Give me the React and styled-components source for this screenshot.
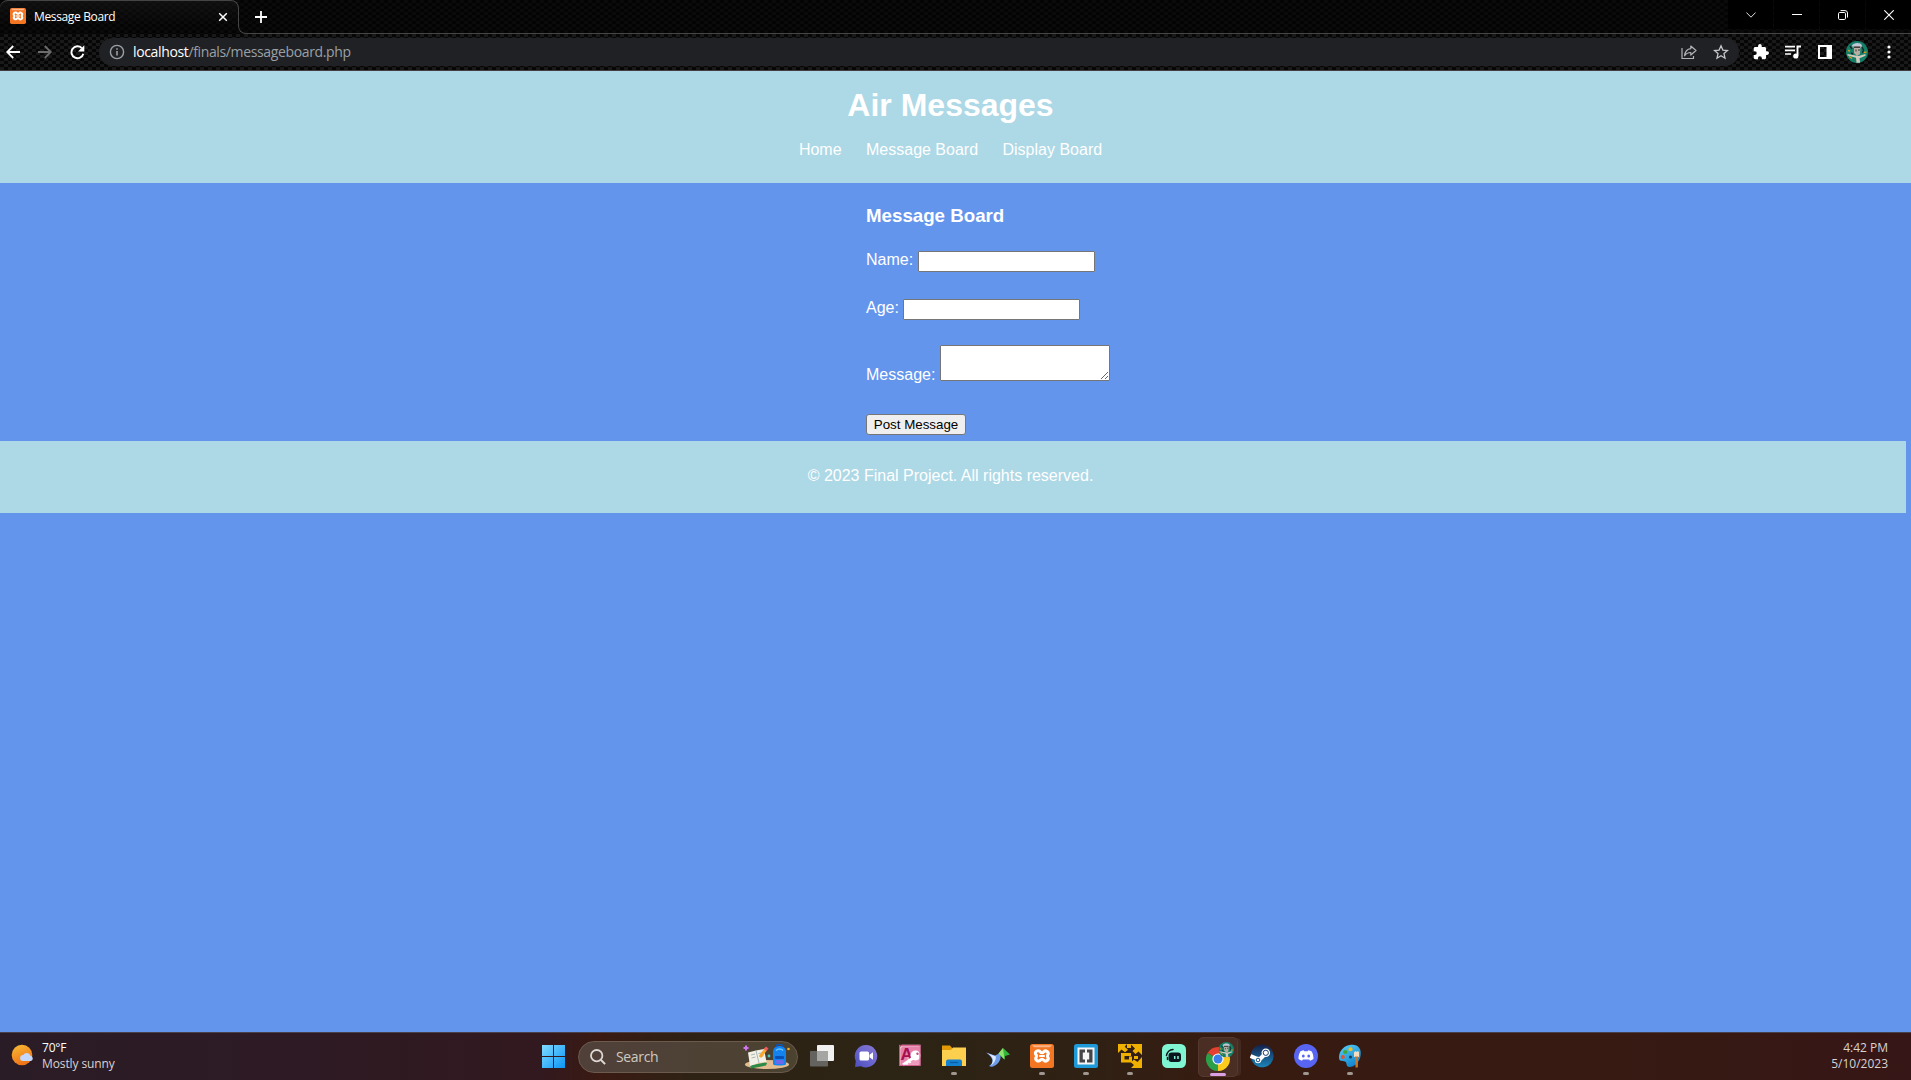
import React from 'react';
import styled, { createGlobalStyle, css } from 'styled-components';

const uiFont = '"Open Sans", "Noto Sans", sans-serif';
const pageFont = '"Liberation Sans", Arial, sans-serif';

const GlobalStyle = createGlobalStyle`
  * { box-sizing: border-box; }
  html, body { margin: 0; padding: 0; background: #6495ed; overflow: hidden; }
  svg { display: block; flex: none; }
`;

const Screen = styled.div`
  width: 100%;
  height: 1080px;
  display: flex;
  flex-direction: column;
  overflow: hidden;
`;

const weave = (a) => css`
  background-image:
    conic-gradient(rgba(255,255,255,${a}) 25%, transparent 0 50%, rgba(255,255,255,${a}) 0 75%, transparent 0);
  background-size: 8px 6px;
`;

/* ---------- browser ---------- */
const TabStrip = styled.div`
  height: 34px;
  display: flex;
  background-color: #040404;
  ${weave(0.022)}
`;
const Tab = styled.div`
  width: 239px;
  height: 26px;
  padding: 7px 9px 0 10px;
  display: flex;
  align-items: flex-start;
  border: 1px solid #454545;
  border-width: 1px 1px 0 0;
  border-radius: 8px 8px 0 0;
  background: linear-gradient(#1f1f1f66, #00000000);
`;
const TabTitle = styled.span`
  flex: 1;
  margin-left: 8px;
  font: 12px/18px ${uiFont};
  letter-spacing: -0.36px;
  color: #fff;
  white-space: nowrap;
`;
const TabClose = styled.span`
  padding: 4px 1px 0 0;
`;
const TabFlare = styled.div`
  align-self: flex-end;
  width: 9px;
  height: 9px;
  margin-left: -1px;
  border: 1px solid #454545;
  border-width: 0 0 1px 1px;
  border-radius: 0 0 0 8px;
`;
const StripRest = styled.div`
  flex: 1;
  display: flex;
  justify-content: space-between;
  border-bottom: 1px solid #454545;
`;
const NewTab = styled.span`
  padding: 11px 0 0 8px;
`;
const WindowControls = styled.div`
  display: flex;
  gap: 1px;
  height: 29px;
`;
const WindowButton = styled.span`
  width: 45px;
  display: flex;
  align-items: center;
  justify-content: center;
  background: #000;
`;
const Toolbar = styled.div`
  height: 37px;
  display: flex;
  align-items: center;
  padding-right: 6px;
  background-color: #060606;
  ${weave(0.075)}
  border-bottom: 1px solid #433c40;
`;
const ToolButton = styled.span`
  width: ${(p) => p.$w || 32}px;
  padding-right: ${(p) => p.$pad || 0}px;
  display: flex;
  justify-content: center;
`;
const Omnibox = styled.div`
  flex: 1;
  height: 28px;
  margin: 0 6px;
  padding: 0 2px 0 10px;
  display: flex;
  align-items: center;
  border-radius: 14px;
  background: #202124;
`;
const Url = styled.span`
  flex: 1;
  margin-left: 8px;
  font: 14px/20px ${uiFont};
  letter-spacing: -0.36px;
  color: #9aa0a6;
  b { font-weight: 400; color: #fff; }
`;

/* ---------- web page ---------- */
const Page = styled.div`
  height: 961px;
  background: #6495ed;
  color: #fff;
  font: 16px/18px ${pageFont};
`;
const PageHeader = styled.header`
  height: 112px;
  padding: 16px 10px 0 0;
  display: flex;
  flex-direction: column;
  align-items: center;
  gap: 17px;
  background: #add8e6;
`;
const SiteTitle = styled.h1`
  margin: 0;
  font-size: 32px;
  line-height: 37px;
`;
const Nav = styled.nav`
  display: flex;
  gap: 24.45px;
`;
const NavLink = styled.a`
  color: #fff;
  text-decoration: none;
`;
const Form = styled.form`
  height: 258px;
  padding: 22px 0 0 866px;
  display: flex;
  flex-direction: column;
  align-items: flex-start;
`;
const FormTitle = styled.h3`
  margin: 0 0 25px;
  font-size: 18.72px;
  line-height: 21px;
`;
const Field = styled.label`
  display: flex;
  align-items: flex-start;
  gap: 4.45px;
  height: ${(p) => p.$h || 21}px;
  margin-bottom: ${(p) => p.$gap}px;
`;
const FieldName = styled.span`
  align-self: ${(p) => (p.$bottom ? 'flex-end' : 'flex-start')};
`;
const Input = styled.input`
  width: 177px;
  height: 21px;
  margin: 0;
  padding: 1px 2px;
  border: 1px solid #767676;
  border-radius: 1px;
  background: #fff;
`;
const TextArea = styled.textarea`
  width: 170px;
  height: 36px;
  margin: 0;
  padding: 2px;
  border: 1px solid #767676;
  border-radius: 1px;
  background: #fff;
`;
const Submit = styled.button`
  width: 100px;
  height: 21px;
  margin: 0;
  padding: 0;
  border: 1px solid #767676;
  border-radius: 3px;
  background: #efefef;
  color: #000;
  font: 13.333px/15px ${pageFont};
  white-space: nowrap;
`;
const PageFooter = styled.footer`
  width: calc(100% - 5px);
  height: 72px;
  padding: 26px 5px 0 0;
  text-align: center;
  background: #add8e6;
`;

/* ---------- taskbar ---------- */
const Taskbar = styled.div`
  height: 48px;
  display: grid;
  grid-template-columns: 531px 1fr 531px;
  border-top: 1px solid #49404a;
  background: linear-gradient(90deg, #2a1c26 0, #2d1a24 270px, #32191f 540px, #3a1a12 600px, #2e2214 690px, #2c2414 900px, #2f2114 1080px, #371b11 1220px, #371a12 1600px, #361616 1911px);
  font: 12px/16px ${uiFont};
  color: #d8d3d2;
`;
const Weather = styled.div`
  display: flex;
  padding: 7px 0 0 11px;
`;
const Lines = styled.div`
  display: flex;
  flex-direction: column;
  padding-left: 7px;
`;
const Line = styled.span`
  white-space: nowrap;
  letter-spacing: ${(p) => p.$ls || 0}px;
  color: ${(p) => p.$c || 'inherit'};
`;
const Dock = styled.div`
  display: flex;
  align-items: center;
`;
const Start = styled.span`
  width: 47px;
  padding-left: 11px;
`;
const SearchPill = styled.div`
  width: 220px;
  height: 32px;
  margin-right: 2px;
  padding: 0 6px 0 11px;
  display: flex;
  align-items: center;
  border: 1px solid #6a5b4c;
  border-radius: 16px;
  background: linear-gradient(90deg, #50403a, #4b4230);
`;
const SearchText = styled.span`
  flex: 1;
  margin-left: 10px;
  font: 14px/20px ${uiFont};
  letter-spacing: -0.35px;
  color: #cfc9c2;
`;
const Slot = styled.div`
  width: 44px;
  height: 47px;
  display: grid;
  grid-template-rows: 24px 3px;
  row-gap: 4px;
  padding-top: 11px;
  justify-items: center;
  align-items: center;
`;
const ActiveSlot = styled(Slot)`
  width: 40px;
  height: 40px;
  margin: 0 2px;
  padding-top: 7px;
  border: 1px solid #55392f;
  border-radius: 5px;
  background: #4a2e23;
  box-shadow: 4px 0 0 -1px #432920;
`;
const Running = styled.span`
  width: ${(p) => (p.$active ? 16 : 6)}px;
  height: 3px;
  border-radius: 2px;
  background: ${(p) => (p.$active ? '#dba0e3' : '#a09790')};
`;
const Clock = styled.div`
  display: flex;
  flex-direction: column;
  align-items: flex-end;
  padding: 7px 23px 0 0;
`;

/* ---------- drawings ---------- */
const Svg = ({ s = 24, w, h, vb, children }) => (
  <svg width={w || s} height={h || s} viewBox={vb || `0 0 ${w || s} ${h || s}`} fill="none">{children}</svg>
);

const Xampp = ({ s }) => (
  <Svg s={s} vb="0 0 24 24">
    <rect width="24" height="24" rx="2.5" fill="#f37623" />
    <path d="M2 1.2h20l-2 2H4z" fill="#f9b48a" />
    <path d="M8 6.7a2.5 2.5 0 0 0-1.6 4.5v1.6A2.5 2.5 0 1 0 10.5 16c.6-1.1 2.4-1.1 3 0a2.5 2.5 0 1 0 4.1-3.2v-1.6A2.5 2.5 0 1 0 13.5 8c-.6 1.1-2.4 1.1-3 0A2.5 2.5 0 0 0 8 6.7z" stroke="#fff" strokeWidth="3" />
    <path d="M9.2 12h5.6" stroke="#fff" strokeWidth="2" />
  </Svg>
);

const Avatar = ({ s }) => (
  <Svg s={s} vb="0 0 22 22">
    <circle cx="11" cy="11" r="11" fill="#15806a" />
    <path d="M6 4.5C7 1.5 15 .8 16 4.5L15 7H7z" fill="#bfc8d6" />
    <path d="M8 5h6.5l-.5 8-3 2-3-3z" fill="#b9aea4" />
    <path d="M7.5 6.2h6.8" stroke="#222" strokeWidth="1.2" />
    <path d="M10 8.5v2M13 8v2" stroke="#3b3634" />
    <path d="M1.5 13l8 1.5 3 .5 7-2v1.7l-6 2.5.6 4.6h-3.6l-.5-5-8.500-2.300z" fill="#d2cabd" />
    <path d="M2 9.500l2 .5M17.500 11.500l3-.3M3 15.500l3 2" stroke="#e09a1d" strokeWidth="1.300" />
    <path d="M4 5l2 3M16 6l1.500 3-1 3M5 12l2 1" stroke="#102b28" strokeWidth="1.400" />
  </Svg>
);

const SearchArt = () => (
  <Svg w={48} h={26}>
    <ellipse cx="24" cy="20.500" rx="22" ry="4.500" fill="#e3bd90" />
    <path d="M7 21.500l15-3 2 .5-1 2.500-15 3z" fill="#2c8b46" />
    <path d="M5 8.500l8-2 8-1.500 2.500 13-8 1-8.500 3z" fill="#f2f1e8" />
    <path d="M13 6.500l3 12.500M8 11l4-1M8.500 14l4-1M15.500 9.500l4-.7M16.500 12.500l4-.7" stroke="#a9b6b0" />
    <path d="M17 13l6-8" stroke="#f8a72b" strokeWidth="3" />
    <path d="M22.200 6l2-2.600" stroke="#ef5963" strokeWidth="3.200" />
    <path d="M30 8c0-8 13-8 13 0v12c0 2-13 2-13 0z" fill="#1583ef" />
    <path d="M33.500 3c0-4 6-4 6 0" stroke="#0b57bd" strokeWidth="1.500" />
    <path d="M33 6.500c2-2 5.500-2 7 0" stroke="#65c6ff" strokeWidth="1.500" />
    <rect x="32" y="12" width="9" height="3" rx="1" fill="#0a4fb4" />
    <rect x="32" y="16" width="9" height="4" rx="1.500" fill="#6b68ea" />
    <path d="M3 1.500v5M.5 4h5" stroke="#d274ef" strokeWidth="2" />
    <circle cx="26" cy="12" r="1.400" fill="#49c6b4" />
    <circle cx="45.500" cy="5" r="1.300" fill="#f6b42a" />
  </Svg>
);

const TaskViewIcon = () => (
  <Svg>
    <rect x="7" y="1" width="17" height="16" rx="1" fill="#f1f1f1" />
    <rect x="0" y="7" width="18" height="15.500" rx="1" fill="#6a6a68" fillOpacity=".9" />
    <path d="M7 7h11v10H7z" fill="#a5a5a3" />
  </Svg>
);
const ChatIcon = () => (
  <Svg>
    <defs><linearGradient id="chat" x1="1" y1="0" x2="0" y2="1"><stop stopColor="#8b78d0" /><stop offset=".5" stopColor="#6b67cf" /><stop offset="1" stopColor="#4d4dbd" /></linearGradient></defs>
    <path d="M12 1a11.200 11.200 0 1 1-5 21.200L1 23l.8-6A11.200 11.200 0 0 1 12 1z" fill="url(#chat)" />
    <rect x="5.500" y="7.500" width="9.500" height="9" rx="1.500" fill="#fff" />
    <path d="M15.500 10.800l3.500-2.500v7.400l-3.500-2.500z" fill="#fff" />
  </Svg>
);
const AccessIcon = () => (
  <Svg>
    <path d="M4 .8h18.500v21H1V4z" fill="#f3b7cd" />
    <path d="M4.500 2.500H21V13L8 20.500H2.500V5z" fill="#e783ab" />
    <path d="M9 13l12-4v11H9z" fill="#ee9cbd" />
    <text x="2.500" y="16" fontFamily="Liberation Sans" fontWeight="700" fontSize="17" fill="#a5104f">A</text>
    <circle cx="17.500" cy="11.500" r="5" fill="#fff" />
    <path d="M15 14L5 21" stroke="#fff" strokeWidth="3" />
    <path d="M8 19l1.500 2M11 17l1.500 2" stroke="#fff" strokeWidth="2" />
    <circle cx="19.500" cy="9.800" r="1.200" fill="#c64b80" />
    <rect x="1.500" y="1.300" width="20.500" height="20" stroke="#cf4f86" />
  </Svg>
);
const FolderIcon = () => (
  <Svg>
    <path d="M0 1.500h8l2.500 3H24V22H0z" fill="#e39a07" />
    <path d="M0 6h9l2-2.500h13V22H0z" fill="#fdcf4f" />
    <path d="M4 22v-4.500a2 2 0 0 1 2-2h12a2 2 0 0 1 2 2V22z" fill="#1480d0" />
    <path d="M8 18.500h8" stroke="#0b5aa5" strokeWidth="1.200" />
  </Svg>
);
const ShuttleIcon = () => (
  <Svg>
    <path d="M0 8.500l9 3 5-2.500c2 6-1 11-7 13.500-1.500.5-3 .3-4-.5 5-3 5-8-3-13.500z" fill="#6d9de8" />
    <path d="M1 9l9 3.500c0 4-2 7-5.500 9.300 4-5 3-9-3.500-12.800z" fill="#dceaff" />
    <path d="M17 4l7 6.500-5 1.500-.5 3.500-6-6z" fill="#34b63a" />
    <path d="M17 4l1.500 11.500-6-6z" fill="#8fe36e" />
  </Svg>
);
const BracketsIcon = () => (
  <Svg>
    <rect width="24" height="24" rx="2.500" fill="#1f9ad9" />
    <rect x="3.500" y="3.500" width="17" height="17" fill="#f5f5f5" />
    <path d="M5.500 5.500H11v3H8.800v7H11v3H5.500zM18.500 5.500H13v3h2.200v7H13v3h5.500z" fill="#434549" />
  </Svg>
);
const VmwareIcon = () => (
  <Svg>
    <g fill="#efb000">
      <path d="M0 0h9L6.700 2.700l3.300 3L7 8.300 3.500 5.500 0 9z" />
      <path d="M12.500 0H24v11l-3.500-3.500-3 2.500-3-3 2.500-2.500z" />
      <path d="M24 24H13l3-3-3-2.500 2.800-3 3.700 2.500L24 13z" />
      <path d="M3 9h5v3H6.500v3.500H11v-3h3v6H3z" />
      <path d="M9 0h4v4H9z" />
    </g>
    <path d="M8 9h5v3H8zM16 12h4v3h-4z" fill="#efb000" />
  </Svg>
);
const StreamlabsIcon = () => (
  <Svg>
    <rect width="24" height="24" rx="5.500" fill="#80f5d2" />
    <rect x="6.500" y="8.500" width="12.500" height="9.500" rx="3" fill="#09161d" />
    <path d="M4.500 11.500A7 7 0 0 1 11 5.500M5.500 13.500v2" stroke="#09161d" strokeWidth="1.500" strokeLinecap="round" />
    <path d="M12.700 12v3M16 12v3" stroke="#80f5d2" strokeWidth="1.500" />
  </Svg>
);
const ChromeGlyph = () => (
  <Svg w={32} h={30} vb="-4 -5 32 30">
    <path d="M12 12L1.600 6A12 12 0 0 1 22.400 6z" fill="#e5402f" />
    <path d="M12 12l5.200 3L12 24A12 12 0 0 1 1.600 6z" fill="#2c9f49" />
    <path d="M12 12V6.500h10.700A12 12 0 0 1 12 24z" fill="#fcca1c" />
    <circle cx="12" cy="12" r="5.600" fill="#fff" />
    <circle cx="12" cy="12" r="4.500" fill="#3c7fe8" />
    <svg x="12.500" y="-5" width="15.500" height="15.500"><Avatar s={15.5} /></svg>
  </Svg>
);
const SteamIcon = () => (
  <Svg>
    <defs><linearGradient id="steam" x2="0" y2="1"><stop stopColor="#14204a" /><stop offset="1" stopColor="#1b84ba" /></linearGradient></defs>
    <path d="M1 9.500A11.400 11.400 0 1 1 1.500 16z" fill="url(#steam)" />
    <path d="M.5 12l7.500 3M9 16l5-5" stroke="#fff" strokeWidth="4" />
    <circle cx="8" cy="16" r="3.200" fill="#fff" />
    <circle cx="8" cy="16" r="1.800" stroke="#1b5486" />
    <circle cx="15.800" cy="8.800" r="4.300" fill="#fff" />
    <circle cx="15.800" cy="8.800" r="2.600" stroke="#1a3c6c" />
  </Svg>
);
const DiscordIcon = () => (
  <Svg>
    <circle cx="12" cy="12" r="12" fill="#5865f2" />
    <path d="M8.500 6.500l1.300-.3.600 1h3.200l.6-1c1.300.2 2.500.6 3.300 1.100 1.500 2.400 2.100 5 2 7.700-1 .9-2.300 1.400-3.500 1.700l-.8-1.300H8.800L8 16.700c-1.200-.3-2.500-.8-3.500-1.700-.1-2.700.5-5.300 2-7.700z" fill="#fff" />
    <ellipse cx="9.300" cy="12" rx="1.400" ry="1.600" fill="#5865f2" />
    <ellipse cx="14.700" cy="12" rx="1.400" ry="1.600" fill="#5865f2" />
  </Svg>
);
const PaintIcon = () => (
  <Svg>
    <defs><linearGradient id="paint" x2=".6" y2="1"><stop stopColor="#5bd3f5" /><stop offset="1" stopColor="#1284cf" /></linearGradient></defs>
    <path d="M13 .8C20 0 24 5 22.500 12c-1 6-6 11-11 11-4 0-2-4.500-4.500-5.500S1 18 1 13.500C1 7 6 1.500 13 .8z" fill="url(#paint)" />
    <circle cx="7.200" cy="8" r="2.100" fill="#45a536" />
    <circle cx="12.500" cy="5.200" r="2" fill="#f7bd1e" />
    <circle cx="4.800" cy="13" r="2" fill="#e75033" />
    <circle cx="12.500" cy="13" r="1.500" fill="#173b59" />
    <path d="M16 8.500l1.200-1.500 1 1 1-1 1 1L21 7v6h-5z" fill="#f3dcc0" />
    <path d="M17 12.500h3.200l-.4 11h-2.300z" fill="#c97527" />
  </Svg>
);

const apps = [
  { id: 'tasks', icon: TaskViewIcon },
  { id: 'chat', icon: ChatIcon },
  { id: 'access', icon: AccessIcon },
  { id: 'files', icon: FolderIcon, running: true },
  { id: 'shuttle', icon: ShuttleIcon },
  { id: 'xampp', icon: Xampp, running: true },
  { id: 'brackets', icon: BracketsIcon, running: true },
  { id: 'vmware', icon: VmwareIcon, running: true },
  { id: 'streamlabs', icon: StreamlabsIcon },
  { id: 'chrome', icon: ChromeGlyph, running: true, active: true },
  { id: 'steam', icon: SteamIcon },
  { id: 'discord', icon: DiscordIcon, running: true },
  { id: 'paint', icon: PaintIcon, running: true },
];

const fields = [
  { label: 'Name:', gap: 27 },
  { label: 'Age:', gap: 25 },
];

function BrowserChrome() {
  return (
    <>
      <TabStrip>
        <Tab>
          <Xampp s={16} />
          <TabTitle>Message Board</TabTitle>
          <TabClose><Svg s={10}><path d="M1.200 1.200l7.600 7.600M8.800 1.200L1.200 8.800" stroke="#fff" strokeWidth="1.500" /></Svg></TabClose>
        </Tab>
        <TabFlare />
        <StripRest>
          <NewTab><Svg s={12}><path d="M6 0v12M0 6h12" stroke="#fff" strokeWidth="1.800" /></Svg></NewTab>
          <WindowControls>
            <WindowButton><Svg w={10} h={6}><path d="M.4.500L5 5.200 9.600.5" stroke="#ddd" /></Svg></WindowButton>
            <WindowButton><Svg w={10} h={1}><path d="M0 .5h10" stroke="#fff" /></Svg></WindowButton>
            <WindowButton><Svg s={10}><rect x=".5" y="2.500" width="7" height="7" rx="1.200" stroke="#fff" /><path d="M2.500.6H7A2.500 2.500 0 0 1 9.500 3v4.500" stroke="#fff" /></Svg></WindowButton>
            <WindowButton><Svg s={10}><path d="M.3.300l9.400 9.400M9.700.3L.3 9.700" stroke="#fff" strokeWidth="1.100" /></Svg></WindowButton>
          </WindowControls>
        </StripRest>
      </TabStrip>
      <Toolbar>
        <ToolButton $w={29} $pad={3}><Svg s={14}><path d="M14 7H1.500M7.200 1L1.200 7l6 6" stroke="#fff" strokeWidth="1.800" /></Svg></ToolButton>
        <ToolButton><Svg s={14}><path d="M0 7h12.500M6.800 1l6 6-6 6" stroke="#6c6c6c" strokeWidth="1.800" /></Svg></ToolButton>
        <ToolButton><Svg s={15}><path d="M13.300 8.800A6 6 0 1 1 11.700 3" stroke="#fff" strokeWidth="1.900" /><path d="M14.300.3v6.200H8z" fill="#fff" /></Svg></ToolButton>
        <Omnibox>
          <Svg s={16}><circle cx="8" cy="8" r="6.600" stroke="#9aa0a6" strokeWidth="1.400" /><path d="M8 7v4.500M8 4.200v1.600" stroke="#9aa0a6" strokeWidth="1.600" /></Svg>
          <Url><b>localhost</b>/finals/messageboard.php</Url>
          <ToolButton><Svg s={16}><path d="M1 4v10.500h11.500V12" stroke="#b0b3b8" strokeWidth="1.200" /><path d="M9.800 2l5.200 4.500-5.200 4.500V8.500C7 8.500 5 9.500 3.600 11.800 4 7.700 6 5 9.800 4.600z" stroke="#b0b3b8" strokeWidth="1.200" strokeLinejoin="round" /></Svg></ToolButton>
          <ToolButton><Svg s={16}><path d="M8 1.800l1.900 4.300 4.600.4-3.500 3.100 1 4.600-4-2.400-4 2.400 1-4.600-3.500-3.100 4.600-.4z" stroke="#c4c7cb" strokeWidth="1.300" /></Svg></ToolButton>
        </Omnibox>
        <ToolButton><Svg s={16} vb="1 1 22 22"><path fill="#fff" d="M20.500 11H19V7c0-1.100-.9-2-2-2h-4V3.500a2.500 2.500 0 0 0-5 0V5H4c-1.100 0-2 .9-2 2v3.800h1.500a2.700 2.700 0 0 1 0 5.400H2V20c0 1.100.9 2 2 2h3.800v-1.500a2.700 2.700 0 0 1 5.400 0V22H17c1.100 0 2-.9 2-2v-4h1.500a2.500 2.500 0 0 0 0-5z" /></Svg></ToolButton>
        <ToolButton><Svg s={16}><path d="M0 2.600h10M0 6.300h10M0 10h6" stroke="#fff" strokeWidth="1.700" /><path d="M12.500 11.800V2.500H16" stroke="#fff" strokeWidth="1.900" /><circle cx="10.800" cy="12" r="2.600" fill="#fff" /></Svg></ToolButton>
        <ToolButton><Svg s={14}><rect x="1" y="1" width="12" height="12" stroke="#fff" strokeWidth="2" /><path d="M8.500 1H13v12H8.500z" fill="#fff" /></Svg></ToolButton>
        <ToolButton><Avatar s={22} /></ToolButton>
        <ToolButton><Svg w={4} h={14}><g fill="#fff"><circle cx="2" cy="2" r="1.600" /><circle cx="2" cy="7" r="1.600" /><circle cx="2" cy="12" r="1.600" /></g></Svg></ToolButton>
      </Toolbar>
    </>
  );
}

function MessageBoard() {
  return (
    <Page>
      <PageHeader>
        <SiteTitle>Air Messages</SiteTitle>
        <Nav>
          <NavLink>Home</NavLink>
          <NavLink>Message Board</NavLink>
          <NavLink>Display Board</NavLink>
        </Nav>
      </PageHeader>
      <Form onSubmit={(e) => e.preventDefault()}>
        <FormTitle>Message Board</FormTitle>
        {fields.map((f) => (
          <Field key={f.label} $gap={f.gap}>
            <FieldName>{f.label}</FieldName>
            <Input type="text" />
          </Field>
        ))}
        <Field $h={39} $gap={30}>
          <FieldName $bottom>Message:</FieldName>
          <TextArea />
        </Field>
        <Submit type="submit">Post Message</Submit>
      </Form>
      <PageFooter>© 2023 Final Project. All rights reserved.</PageFooter>
    </Page>
  );
}

function DesktopTaskbar() {
  return (
    <Taskbar>
      <Weather>
        <Svg w={24} h={32}>
          <defs><linearGradient id="sun" x2=".4" y2="1"><stop stopColor="#f8bd35" /><stop offset="1" stopColor="#ef7418" /></linearGradient></defs>
          <circle cx="11" cy="15" r="10.300" fill="url(#sun)" />
          <path d="M12 21a3 3 0 0 1 .2-6 4 4 0 0 1 7.300.8A2.700 2.700 0 0 1 20 21z" fill="#c3d8fa" />
        </Svg>
        <Lines>
          <Line $c="#fff" $ls={-0.2}>70°F</Line>
          <Line $ls={-0.1}>Mostly sunny</Line>
        </Lines>
      </Weather>
      <Dock>
        <Start>
          <Svg s={23}>
            <defs><linearGradient id="win" x2="1" y2="1"><stop stopColor="#80dcff" /><stop offset="1" stopColor="#0a94f5" /></linearGradient></defs>
            <path d="M0 0h11v11H0zM12 0h11v11H12zM0 12h11v11H0zM12 12h11v11H12z" fill="url(#win)" />
          </Svg>
        </Start>
        <SearchPill>
          <Svg s={16}><circle cx="6.700" cy="6.700" r="5.700" stroke="#ddd8d4" strokeWidth="1.800" /><path d="M10.800 10.800l4.300 4.300" stroke="#ddd8d4" strokeWidth="2" /></Svg>
          <SearchText>Search</SearchText>
          <SearchArt />
        </SearchPill>
        {apps.map(({ id, icon: Icon, running, active }) => {
          const Cell = active ? ActiveSlot : Slot;
          return (
            <Cell key={id}>
              <Icon />
              {running && <Running $active={active} />}
            </Cell>
          );
        })}
      </Dock>
      <Clock>
        <Line>4:42 PM</Line>
        <Line>5/10/2023</Line>
      </Clock>
    </Taskbar>
  );
}

export default function App() {
  return (
    <Screen>
      <GlobalStyle />
      <BrowserChrome />
      <MessageBoard />
      <DesktopTaskbar />
    </Screen>
  );
}
